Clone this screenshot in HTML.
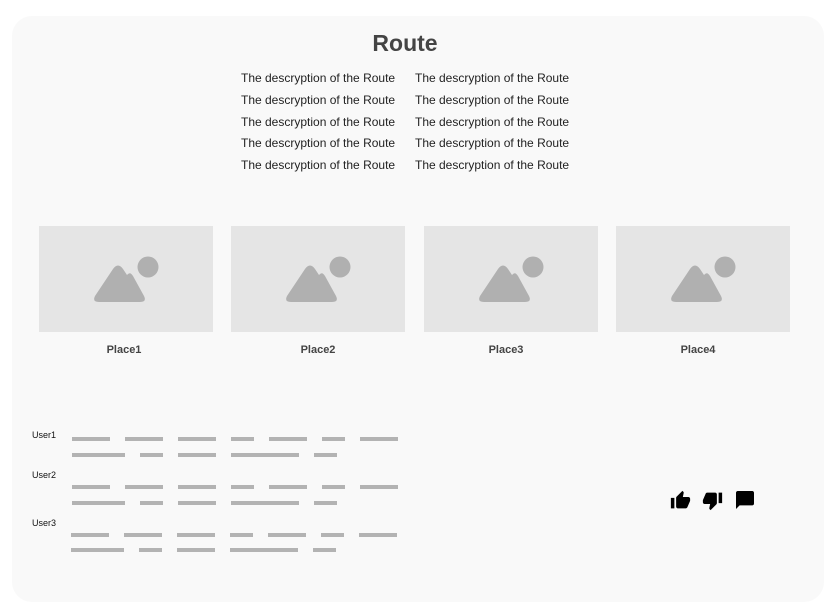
<!DOCTYPE html>
<html><head><meta charset="utf-8"><style>
html,body{margin:0;padding:0;background:#fff;width:830px;height:616px;overflow:hidden;position:relative;font-family:"Liberation Sans",sans-serif}
.card{position:absolute;left:12px;top:16px;width:812px;height:586px;background:#f9f9f9;border-radius:20px}
.t{position:absolute;font-size:12px;color:#222;white-space:nowrap;line-height:14px}
.img{position:absolute;top:226px;width:174px;height:106px;background:#e5e5e5}
.img svg{position:absolute;left:54px;top:30px}
.lbl{position:absolute;top:344px;width:174px;text-align:center;font-size:11px;font-weight:bold;color:#444}
.b{position:absolute;height:4px;background:#b3b3b3}
.u{position:absolute;left:32px;font-size:9px;color:#111}
</style></head><body>
<div class="card"></div>
<div style="position:absolute;left:0;width:810px;top:30px;text-align:center;font-size:23px;font-weight:bold;color:#444">Route</div>
<div class="t" style="left:241px;top:71px">The descryption of the Route</div>
<div class="t" style="left:415px;top:71px">The descryption of the Route</div>
<div class="t" style="left:241px;top:93px">The descryption of the Route</div>
<div class="t" style="left:415px;top:93px">The descryption of the Route</div>
<div class="t" style="left:241px;top:115px">The descryption of the Route</div>
<div class="t" style="left:415px;top:115px">The descryption of the Route</div>
<div class="t" style="left:241px;top:136px">The descryption of the Route</div>
<div class="t" style="left:415px;top:136px">The descryption of the Route</div>
<div class="t" style="left:241px;top:158px">The descryption of the Route</div>
<div class="t" style="left:415px;top:158px">The descryption of the Route</div>

<div class="img" style="left:39px"><svg width="70" height="50" viewBox="0 0 70 50"><circle cx="55" cy="11" r="10.5" fill="#b0b0b0"/><path d="M20 13 Q25 6 30 13 L34 19 Q37 15 40 20 L51 40 Q54 46 47 46 L6 46 Q-1 46 2 40 Z" fill="#b0b0b0"/></svg></div>
<div class="img" style="left:231px"><svg width="70" height="50" viewBox="0 0 70 50"><circle cx="55" cy="11" r="10.5" fill="#b0b0b0"/><path d="M20 13 Q25 6 30 13 L34 19 Q37 15 40 20 L51 40 Q54 46 47 46 L6 46 Q-1 46 2 40 Z" fill="#b0b0b0"/></svg></div>
<div class="img" style="left:424px"><svg width="70" height="50" viewBox="0 0 70 50"><circle cx="55" cy="11" r="10.5" fill="#b0b0b0"/><path d="M20 13 Q25 6 30 13 L34 19 Q37 15 40 20 L51 40 Q54 46 47 46 L6 46 Q-1 46 2 40 Z" fill="#b0b0b0"/></svg></div>
<div class="img" style="left:616px"><svg width="70" height="50" viewBox="0 0 70 50"><circle cx="55" cy="11" r="10.5" fill="#b0b0b0"/><path d="M20 13 Q25 6 30 13 L34 19 Q37 15 40 20 L51 40 Q54 46 47 46 L6 46 Q-1 46 2 40 Z" fill="#b0b0b0"/></svg></div>
<div class="lbl" style="left:37px">Place1</div>
<div class="lbl" style="left:231px">Place2</div>
<div class="lbl" style="left:419px">Place3</div>
<div class="lbl" style="left:611px">Place4</div>

<div class="u" style="top:430px">User1</div>
<div class="u" style="top:470px">User2</div>
<div class="u" style="top:518px">User3</div>

<div class="b" style="top:437px;left:72px;width:38px"></div><div class="b" style="top:437px;left:125px;width:38px"></div><div class="b" style="top:437px;left:178px;width:38px"></div><div class="b" style="top:437px;left:231px;width:23px"></div><div class="b" style="top:437px;left:269px;width:38px"></div><div class="b" style="top:437px;left:322px;width:23px"></div><div class="b" style="top:437px;left:360px;width:38px"></div>
<div class="b" style="top:453px;left:72px;width:53px"></div><div class="b" style="top:453px;left:140px;width:23px"></div><div class="b" style="top:453px;left:178px;width:38px"></div><div class="b" style="top:453px;left:231px;width:68px"></div><div class="b" style="top:453px;left:314px;width:23px"></div>

<div class="b" style="top:485px;left:72px;width:38px"></div><div class="b" style="top:485px;left:125px;width:38px"></div><div class="b" style="top:485px;left:178px;width:38px"></div><div class="b" style="top:485px;left:231px;width:23px"></div><div class="b" style="top:485px;left:269px;width:38px"></div><div class="b" style="top:485px;left:322px;width:23px"></div><div class="b" style="top:485px;left:360px;width:38px"></div>
<div class="b" style="top:501px;left:72px;width:53px"></div><div class="b" style="top:501px;left:140px;width:23px"></div><div class="b" style="top:501px;left:178px;width:38px"></div><div class="b" style="top:501px;left:231px;width:68px"></div><div class="b" style="top:501px;left:314px;width:23px"></div>

<div class="b" style="top:533px;left:71px;width:38px"></div><div class="b" style="top:533px;left:124px;width:38px"></div><div class="b" style="top:533px;left:177px;width:38px"></div><div class="b" style="top:533px;left:230px;width:23px"></div><div class="b" style="top:533px;left:268px;width:38px"></div><div class="b" style="top:533px;left:321px;width:23px"></div><div class="b" style="top:533px;left:359px;width:38px"></div>
<div class="b" style="top:548px;left:71px;width:53px"></div><div class="b" style="top:548px;left:139px;width:23px"></div><div class="b" style="top:548px;left:177px;width:38px"></div><div class="b" style="top:548px;left:230px;width:68px"></div><div class="b" style="top:548px;left:313px;width:23px"></div>

<svg style="position:absolute;left:670px;top:490px" width="21" height="21" viewBox="0 0 24 24"><path d="M1 21h4V9H1v12zm22-11c0-1.1-.9-2-2-2h-6.31l.95-4.57.03-.32c0-.41-.17-.79-.44-1.06L14.170 1 7.59 7.59C7.22 7.95 7 8.45 7 9v10c0 1.1.9 2 2 2h9c.83 0 1.54-.5 1.84-1.22l3.02-7.05c.09-.23.14-.47.14-.73v-2z" fill="#000"/></svg>
<svg style="position:absolute;left:702px;top:490px" width="21" height="21" viewBox="0 0 24 24"><path d="M15 3H6c-.83 0-1.54.5-1.84 1.22l-3.02 7.05c-.09.23-.14.47-.14.73v2c0 1.1.9 2 2 2h6.31l-.95 4.57-.03.32c0 .41.17.79.44 1.06L9.83 23l6.59-6.59c.36-.36.58-.86.58-1.41V5c0-1.1-.9-2-2-2zm4 0v12h4V3h-4z" fill="#000"/></svg>
<svg style="position:absolute;left:736px;top:491px" width="18" height="18" viewBox="2 2 20 20"><path d="M20 2H4c-1.1 0-2 .9-2 2v18l4-4h14c1.1 0 2-.9 2-2V4c0-1.1-.9-2-2-2z" fill="#000"/></svg>
</body></html>
